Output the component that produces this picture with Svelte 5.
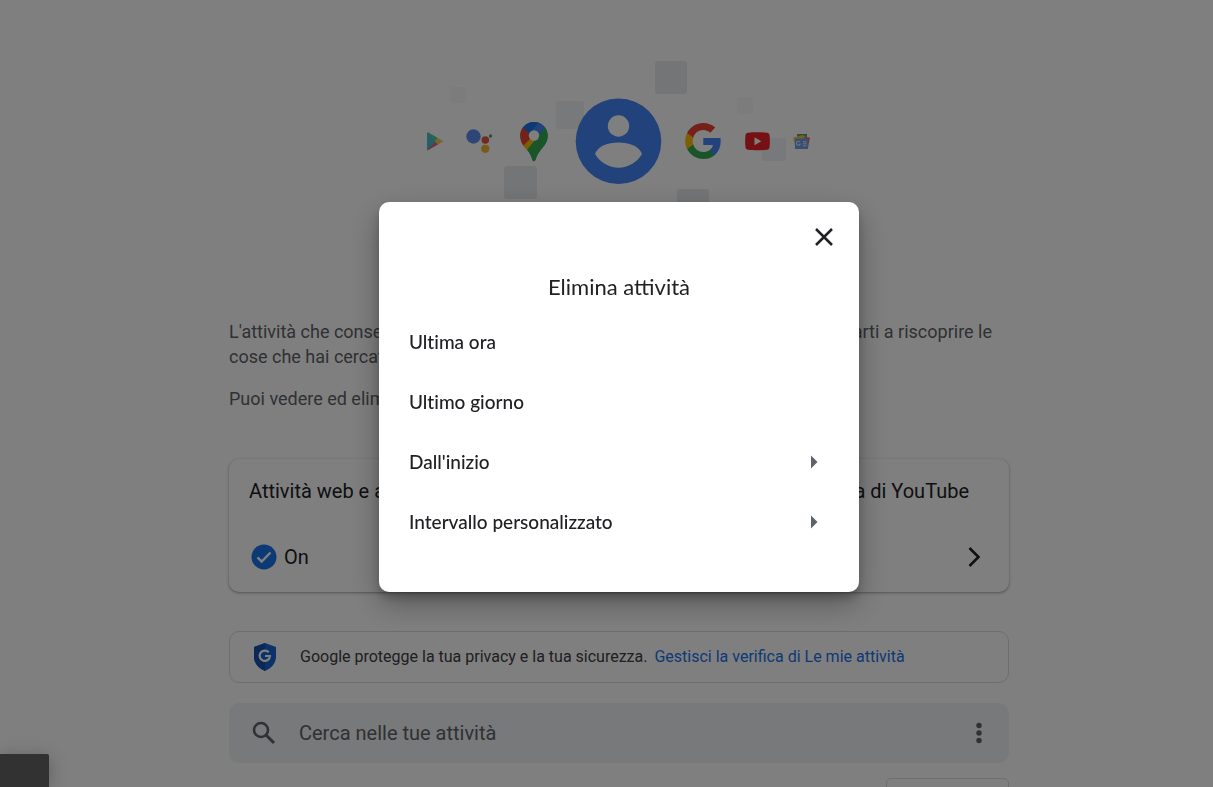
<script>
  const options = [
    { label: 'Ultima ora', more: false },
    { label: 'Ultimo giorno', more: false },
    { label: "Dall'inizio", more: true },
    { label: 'Intervallo personalizzato', more: true }
  ];
</script>

<div class="page">
  <main>
    <svg class="hero" viewBox="0 0 400 180" aria-hidden="true">
      <g fill="#e8eaee">
        <rect x="236" y="6" width="32" height="33" rx="3" />
        <rect x="85" y="111" width="33" height="33" rx="3" />
        <rect x="258" y="134" width="32" height="32" rx="3" />
      </g>
      <g fill="#f1f2f5">
        <rect x="137" y="46" width="28" height="28" rx="3" />
        <rect x="343" y="83" width="24" height="23" rx="2" />
      </g>
      <g fill="#f9f9fa">
        <rect x="31" y="32" width="16" height="16" rx="2" />
        <rect x="318" y="42" width="16" height="17" rx="2" />
      </g>
      <!-- Play -->
      <path fill="#4fd08c" d="M8.500 77 19 83l-4 5-6.500-5z" />
      <path fill="#f3ca5a" d="m19 83 5.500 3.200L19 89.500l-4-3z" />
      <path fill="#e8637a" d="M8.500 95.500 19 89.500 14.500 85 8.500 90z" />
      <path fill="#4bbdd0" d="M8 77.500v18L16.500 86.500z" />
      <!-- Assistant -->
      <circle cx="54.500" cy="81.500" r="7.200" fill="#5b8ceb" />
      <circle cx="66.300" cy="85" r="3.800" fill="#e35449" />
      <circle cx="66.300" cy="93.800" r="4.100" fill="#eeb62d" />
      <circle cx="71.500" cy="81" r="1.700" fill="#42a85c" />
      <!-- Maps -->
      <clipPath id="pin">
        <path d="M115 67c-7.700 0-13.700 6-13.700 13.500 0 7 3.500 10.500 7.300 15 2.400 2.900 3.600 5.300 4.500 8.600.6 2 1 2.100 1.900 2.100s1.200-.3 1.800-2.100c1-3.300 2.100-5.600 4.500-8.600 3.900-4.800 7.400-8.300 7.400-15C128.700 73 122.700 67 115 67z" />
      </clipPath>
      <g clip-path="url(#pin)">
        <path fill="#34a853" d="M100 66h30v42h-30z" />
        <path fill="#fbbc04" d="M98 89 112 77l8 9-12 14-12-2z" />
        <path fill="#ea4335" d="m103 71 11 10-13 13-5-12z" />
        <path fill="#1a73e8" d="M102 71v-6h22l-11 16z" />
        <path fill="#4285f4" d="M121 66 111 78l6 6 12-14z" />
        <path fill="#34a853" d="m128 70-20 25 5 13h20V70z" />
      </g>
      <circle cx="115" cy="80.500" r="5.200" fill="#fff" />
      <!-- Account -->
      <circle cx="199.500" cy="86.300" r="42.800" fill="#4285f4" />
      <circle cx="199.500" cy="71" r="10.700" fill="#fff" />
      <path fill="#fff" d="M176 99c3-8 13-11.500 23.500-11.500S220 91 223 99c-5 8.500-14 13.700-23.500 13.700S181 107.500 176 99z" />
      <!-- Google -->
      <g transform="translate(266 68) scale(1.5)">
        <path fill="#4285f4" d="M23.800 12.200c0-.8-.1-1.500-.2-2.200H12.200v4.600h6.500c-.3 1.500-1.200 2.800-2.500 3.600v3h3.900c2.300-2.100 3.700-5.200 3.700-9z" />
        <path fill="#34a853" d="M12.200 24c3.300 0 6-1.100 7.900-2.900l-3.900-3c-1.100.7-2.400 1.200-4 1.200-3.100 0-5.800-2.100-6.700-5H1.400v3.100C3.400 21.300 7.500 24 12.200 24z" />
        <path fill="#fbbc05" d="M5.500 14.300c-.5-1.500-.5-3.100 0-4.600V6.600H1.400c-1.700 3.400-1.700 7.400 0 10.800z" />
        <path fill="#ea4335" d="M12.200 4.700c1.700 0 3.300.6 4.600 1.800L20.200 3C18 1 15.200 0 12.200 0 7.500 0 3.400 2.700 1.400 6.600l4.100 3.100c.9-2.900 3.600-5 6.700-5z" />
      </g>
      <!-- YouTube -->
      <path fill="#ea2328" d="M329 77.700c5-.6 14-.6 19 0 1.400.2 2.300 1 2.500 2.400.5 3.700.5 8.600 0 12.200-.2 1.400-1.100 2.200-2.500 2.400-5 .6-14 .6-19 0-1.400-.2-2.300-1-2.500-2.400-.5-3.600-.5-8.500 0-12.200.2-1.400 1.100-2.200 2.500-2.400z" />
      <path fill="#fff" d="M335.500 82.300v7.900l6.800-3.900z" />
      <!-- News -->
      <path fill="#4ba567" d="M378 79h10v8h-10z" />
      <path fill="#eebf4b" d="m376 82 8-2 3 2v6h-10z" />
      <path fill="#e66d65" d="m385 82 6 .5-2 10h-4z" />
      <path fill="#f0c759" d="m374 82.500 4-.5v9h-2z" />
      <path fill="#719ce9" d="M376 83.500h13V94h-13z" />
      <path fill="none" stroke="#fff" stroke-opacity=".8" stroke-width="1.100" d="M381 87a2 2 0 1 0 .2 2.200h-1.400M384 86.700h3.500M384 88.700h3.500M384 90.700h3.500" />
    </svg>

    <section class="intro">
      <p>
        <span class="split"><span>L'attività che conser</span><span>utarti a riscoprire le</span></span>
        <span class="split"><span>cose che hai cercat</span></span>
      </p>
      <p>Puoi vedere ed elimi</p>
    </section>

    <section class="card">
      <h2 class="split"><span>Attività web e ap</span><span>ia di YouTube</span></h2>
      <div class="status">
        <svg width="26" height="26" viewBox="0 0 26 26" aria-hidden="true">
          <circle cx="13" cy="13" r="12.500" fill="#1a73e8" />
          <path d="m6.500 13.300 4.200 4.200 8.800-9" fill="none" stroke="#fff" stroke-width="2.400" />
        </svg>
        <span>On</span>
        <svg class="end" width="30" height="30" viewBox="0 0 30 30" aria-hidden="true">
          <path d="m10.500 6 9 9-9 9" fill="none" stroke="#202124" stroke-width="2.600" />
        </svg>
      </div>
    </section>

    <section class="privacy">
      <svg width="24" height="30" viewBox="0 0 24 30" aria-hidden="true">
        <path fill="#1967d2" d="M12 1 23 5v9.500c0 7-4.500 11.500-11 14.500C5.500 26 1 21.500 1 14.500V5z" />
        <path fill="#1552ae" d="M1 14.500V5l11-4v6l-5 6 5 6v10C5.500 26 1 21.500 1 14.500z" />
        <path fill="none" stroke="#fff" stroke-width="2.200" d="M15.700 10.300A5.200 5.200 0 1 0 17 14h-5" />
      </svg>
      <p>Google protegge la tua privacy e la tua sicurezza.<a href="#verifica">Gestisci la verifica di Le mie attività</a></p>
    </section>

    <form class="search">
      <svg width="30" height="30" viewBox="0 0 30 30" aria-hidden="true">
        <circle cx="12" cy="12" r="7" fill="none" stroke="#5f6368" stroke-width="2.600" />
        <path d="m17 17 8 8" stroke="#5f6368" stroke-width="3" />
      </svg>
      <input type="search" placeholder="Cerca nelle tue attività" aria-label="Cerca nelle tue attività" />
      <button type="button" aria-label="Altre opzioni">
        <svg width="30" height="30" viewBox="0 0 30 30" aria-hidden="true">
          <g fill="#5f6368"><circle cx="15" cy="7.500" r="2.700" /><circle cx="15" cy="15" r="2.700" /><circle cx="15" cy="22.500" r="2.700" /></g>
        </svg>
      </button>
    </form>

    <div class="panel"></div>
  </main>
</div>

<div class="overlay">
  <div class="dialog" role="dialog" aria-modal="true" aria-labelledby="dialog-title">
    <button class="close" aria-label="Chiudi">
      <svg width="30" height="30" viewBox="0 0 30 30" aria-hidden="true">
        <path d="m7 7 16 16M23 7 7 23" stroke="#202124" stroke-width="2.500" />
      </svg>
    </button>
    <h1 id="dialog-title">Elimina attività</h1>
    <ul>
      {#each options as option}
        <li>
          <button class="option">
            <span>{option.label}</span>
            {#if option.more}
              <svg width="8" height="14" viewBox="0 0 8 14" aria-hidden="true">
                <path d="M0 0.500 6.500 7 0 13.500z" fill="#5f6368" />
              </svg>
            {/if}
          </button>
        </li>
      {/each}
    </ul>
  </div>
</div>

<div class="toast"></div>

<style>
  :global(body) {
    margin: 0;
    background: #fff;
    font-family: Roboto, "Liberation Sans", sans-serif;
  }
  p, h1, h2, ul {
    margin: 0;
    padding: 0;
  }
  svg {
    display: block;
    flex: none;
  }
  button {
    border: 0;
    padding: 0;
    background: none;
    color: inherit;
    font: inherit;
    cursor: pointer;
  }
  .page {
    height: 100vh;
    overflow: hidden;
    box-sizing: border-box;
    padding: 55px 0 0 25px;
  }
  main {
    display: flex;
    flex-direction: column;
    max-width: 780px;
    margin: 0 auto;
  }
  .hero {
    width: 400px;
    max-width: 100%;
    align-self: center;
  }
  .split {
    display: flex;
    justify-content: space-between;
    white-space: nowrap;
  }
  .intro {
    display: flex;
    flex-direction: column;
    gap: 17px;
    margin-top: 84px;
    padding-right: 17px;
    color: #5f6368;
    font-size: 18px;
    line-height: 25px;
  }
  .card {
    margin-top: 48px;
    padding: 20px;
    border-radius: 10px;
    box-shadow: 0 1px 3px 1px rgba(60, 64, 67, 0.15), 0 1px 2px rgba(60, 64, 67, 0.3);
    color: #202124;
    font-size: 20px;
    line-height: 24px;
  }
  .card h2 {
    padding-right: 20px;
    font-size: 20px;
    font-weight: 400;
  }
  .status {
    display: flex;
    align-items: center;
    gap: 7px;
    margin-top: 39px;
    padding: 0 0 0 2px;
  }
  .end {
    margin-left: auto;
  }
  .privacy {
    display: flex;
    align-items: center;
    gap: 23px;
    box-sizing: border-box;
    min-height: 52px;
    margin-top: 39px;
    padding: 0 23px;
    border: 1px solid #dadce0;
    border-radius: 10px;
    color: #3c4043;
    font-size: 16px;
    line-height: 20px;
  }
  .privacy a {
    margin-left: 7px;
    color: #1a73e8;
    text-decoration: none;
  }
  .search {
    display: flex;
    align-items: center;
    gap: 20px;
    height: 60px;
    margin-top: 20px;
    padding: 0 15px 0 20px;
    border-radius: 10px;
    background: #f1f3f4;
  }
  .search input {
    flex: 1;
    min-width: 0;
    padding: 0;
    border: 0;
    outline: 0;
    background: none;
    font: 20px/24px Roboto, "Liberation Sans", sans-serif;
  }
  .search input::placeholder {
    color: #5f6368;
    opacity: 1;
  }
  .panel {
    align-self: flex-end;
    box-sizing: border-box;
    width: 123px;
    height: 40px;
    margin-top: 15px;
    border: 1px solid #dadce0;
    border-radius: 5px;
  }
  .overlay {
    position: fixed;
    inset: 0;
    display: grid;
    place-items: center;
    padding: 7px 0 0 25px;
    background: rgba(0, 0, 0, 0.5);
  }
  .dialog {
    display: flex;
    flex-direction: column;
    box-sizing: border-box;
    width: 100%;
    max-width: 480px;
    padding: 20px 20px 40px 30px;
    border-radius: 10px;
    background: #fff;
    box-shadow: 0 12px 30px rgba(0, 0, 0, 0.3), 0 6px 10px rgba(0, 0, 0, 0.2);
    color: #202124;
  }
  .close {
    align-self: flex-end;
  }
  h1 {
    margin-top: 20px;
    padding-right: 10px;
    font: 400 22px/30px Lato, sans-serif;
    text-align: center;
  }
  ul {
    margin-top: 10px;
    list-style: none;
  }
  .option {
    display: flex;
    align-items: center;
    justify-content: space-between;
    width: 100%;
    height: 60px;
    padding-right: 20px;
    font: 500 19px/24px Lato, sans-serif;
    font-variant-ligatures: none;
    text-align: left;
  }
  .toast {
    position: fixed;
    left: 0;
    bottom: 0;
    width: 49px;
    height: 33px;
    border-radius: 0 2px 0 0;
    background: #323232;
    box-shadow: 0 3px 18px rgba(0, 0, 0, 0.25);
  }
</style>
